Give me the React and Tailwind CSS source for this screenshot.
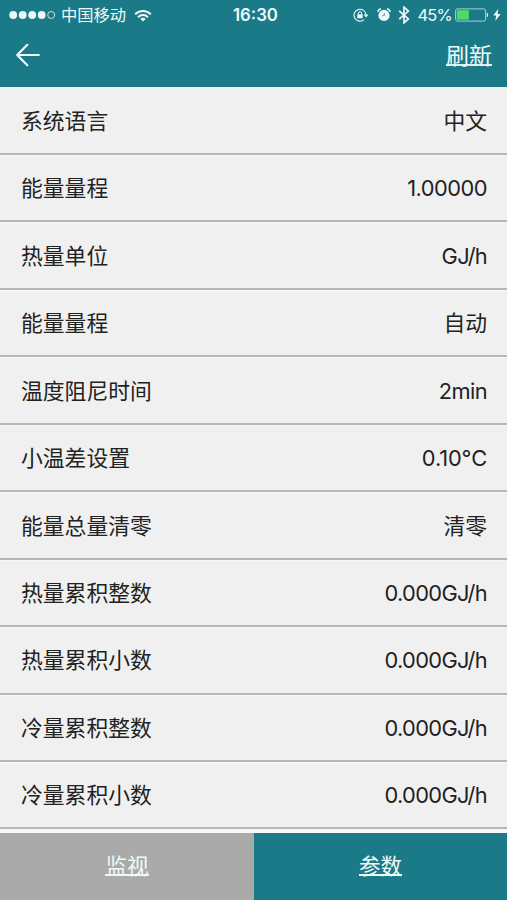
const settings = [
  { label: "系统语言", value: "中文" },
  { label: "能量量程", value: "1.00000", spacing: "tracking-[-0.5px]" },
  { label: "热量单位", value: "GJ/h", spacing: "tracking-[-0.7px]" },
  { label: "能量量程", value: "自动" },
  { label: "温度阻尼时间", value: "2min", spacing: "tracking-[-0.6px]" },
  { label: "小温差设置", value: "0.10°C", spacing: "tracking-[-0.1px]" },
  { label: "能量总量清零", value: "清零" },
  { label: "热量累积整数", value: "0.000GJ/h", spacing: "tracking-[-0.65px]" },
  { label: "热量累积小数", value: "0.000GJ/h", spacing: "tracking-[-0.65px]" },
  { label: "冷量累积整数", value: "0.000GJ/h", spacing: "tracking-[-0.65px]" },
  { label: "冷量累积小数", value: "0.000GJ/h", spacing: "tracking-[-0.65px]" },
];

function SignalDots() {
  return (
    <svg width="47" height="10" viewBox="0 0 47 10" fill="currentColor">
      <circle cx="4.2" cy="5" r="3.9" />
      <circle cx="13.7" cy="5" r="3.9" />
      <circle cx="23.2" cy="5" r="3.9" />
      <circle cx="32.7" cy="5" r="3.9" />
      <circle cx="42.2" cy="5" r="3.5" fill="none" stroke="currentColor" strokeWidth="0.8" />
    </svg>
  );
}

function WifiIcon() {
  return (
    <svg width="18" height="13" viewBox="0 0 18 13" fill="none" stroke="currentColor" strokeWidth="2">
      <path d="M1.2 5.2a11 11 0 0 1 15.6 0" />
      <path d="M4 8.2a7 7 0 0 1 10 0" />
      <path d="M9 12.6 6.3 10a3.8 3.8 0 0 1 5.4 0z" fill="currentColor" stroke="none" />
    </svg>
  );
}

function RotationLockIcon() {
  return (
    <svg width="16" height="14" viewBox="0 0 16 14" fill="none" stroke="currentColor">
      <path d="M11 11.7A6 6 0 1 1 13 7" strokeWidth="1.1" />
      <path d="M10.7 6.5h4.8L13.1 9.6z" fill="currentColor" stroke="none" />
      <rect x="4.3" y="6.2" width="5.4" height="4" rx="0.4" fill="currentColor" stroke="none" />
      <path d="M5.4 6.5V5.2a1.6 1.6 0 0 1 3.2 0v1.3" strokeWidth="1" />
    </svg>
  );
}

function AlarmIcon() {
  return (
    <svg width="14" height="14" viewBox="0 0 14 14">
      <circle cx="7" cy="7.4" r="5.6" fill="currentColor" />
      <path d="M.9 4A3 3 0 0 1 4 1M13.1 4A3 3 0 0 0 10 1" fill="none" stroke="currentColor" strokeWidth="1.5" />
      <path d="M7.3 4.8v2.9H5.3" fill="none" stroke="#1b7a87" strokeWidth="0.7" />
    </svg>
  );
}

function BluetoothIcon() {
  return (
    <svg width="12" height="18" viewBox="0 0 12 18" fill="none" stroke="currentColor" strokeWidth="1.7">
      <path d="m1.2 4.8 9.2 8.1L6 16.8V1.2l4.4 3.9-9.2 8.1" />
    </svg>
  );
}

function BatteryIcon() {
  return (
    <svg width="34" height="14" viewBox="0 0 34 14">
      <rect x="0.6" y="0.9" width="30" height="12.2" rx="1.8" fill="none" stroke="#b9dadd" strokeWidth="0.9" />
      <rect x="1.9" y="2.2" width="12" height="9.6" rx="0.5" fill="#4cdb64" />
      <path d="M31.8 4.6c1.8.7 1.8 4.1 0 4.8z" fill="currentColor" />
    </svg>
  );
}

function StatusBar() {
  return (
    <div className="flex h-[30px] items-center pl-[9px] pr-[6px]">
      <div className="flex w-[224px] items-center">
        <SignalDots />
        <span className="ml-[5px] mr-[8px] text-[16.3px] leading-[30px]">中国移动</span>
        <WifiIcon />
      </div>
      <span className="text-[16.8px] font-semibold leading-[30px]">16:30</span>
      <div className="ml-auto flex items-center">
        <RotationLockIcon />
        <span className="ml-[8px]"><AlarmIcon /></span>
        <span className="ml-[7px] mr-[8px]"><BluetoothIcon /></span>
        <span className="text-[16.5px] leading-[30px] tracking-[-0.8px]">45%</span>
        <span className="ml-[3px] mr-[4px]"><BatteryIcon /></span>
        <svg width="8" height="14" viewBox="0 0 8 14" fill="currentColor">
          <path d="M5.2 1 .2 7.6h3L2.3 13l5.3-7H4.5z" />
        </svg>
      </div>
    </div>
  );
}

export default function App() {
  return (
    <div className="flex h-[900px] w-[507px] flex-col overflow-hidden bg-[#f0f0f0] font-['Inter','Noto_Sans_CJK_SC',sans-serif]">
      <header className="h-[87px] shrink-0 bg-[#1b7a87] text-[#eefafa]">
        <StatusBar />
        <div className="flex h-[50px] items-center justify-between pl-[15px] pr-[15px]">
          <button aria-label="返回">
            <svg width="26" height="24" viewBox="0 0 26 24" fill="none" stroke="currentColor" strokeWidth="2.2" strokeLinecap="round" strokeLinejoin="round">
              <path d="M12.3 1.8 2.2 12l10.1 10.2M2.4 12h21.4" />
            </svg>
          </button>
          <button className="border-b-2 border-[#d9eef0] pt-[3px] text-[23px] leading-[16px]">刷新</button>
        </div>
      </header>

      {/* Settings list */}
      <ul className="shrink-0 pt-[0.6px] text-[21.8px] text-[#222]">
        {settings.map((item, i) => (
          <li
            key={i}
            className="flex h-[67.45px] items-center justify-between border-b-2 border-[#b0b8ba] pl-[21px] pr-[20px] pt-[2px] shadow-[0_1px_0_#f8f8f8]"
          >
            <span>{item.label}</span>
            <span className={item.spacing}>{item.value}</span>
          </li>
        ))}
      </ul>

      {/* Bottom tabs */}
      <nav className="flex flex-1 border-t-4 border-[#f8f8f8] text-[21.5px] text-[#eefafa]">
        <button className="flex w-[254px] items-center justify-center bg-[#aaa]">
          <span className="border-b-2 pt-[2px] leading-[15px]">监视</span>
        </button>
        <button className="flex flex-1 items-center justify-center bg-[#1b7a87]">
          <span className="border-b-2 pt-[2px] leading-[15px]">参数</span>
        </button>
      </nav>
    </div>
  );
}
